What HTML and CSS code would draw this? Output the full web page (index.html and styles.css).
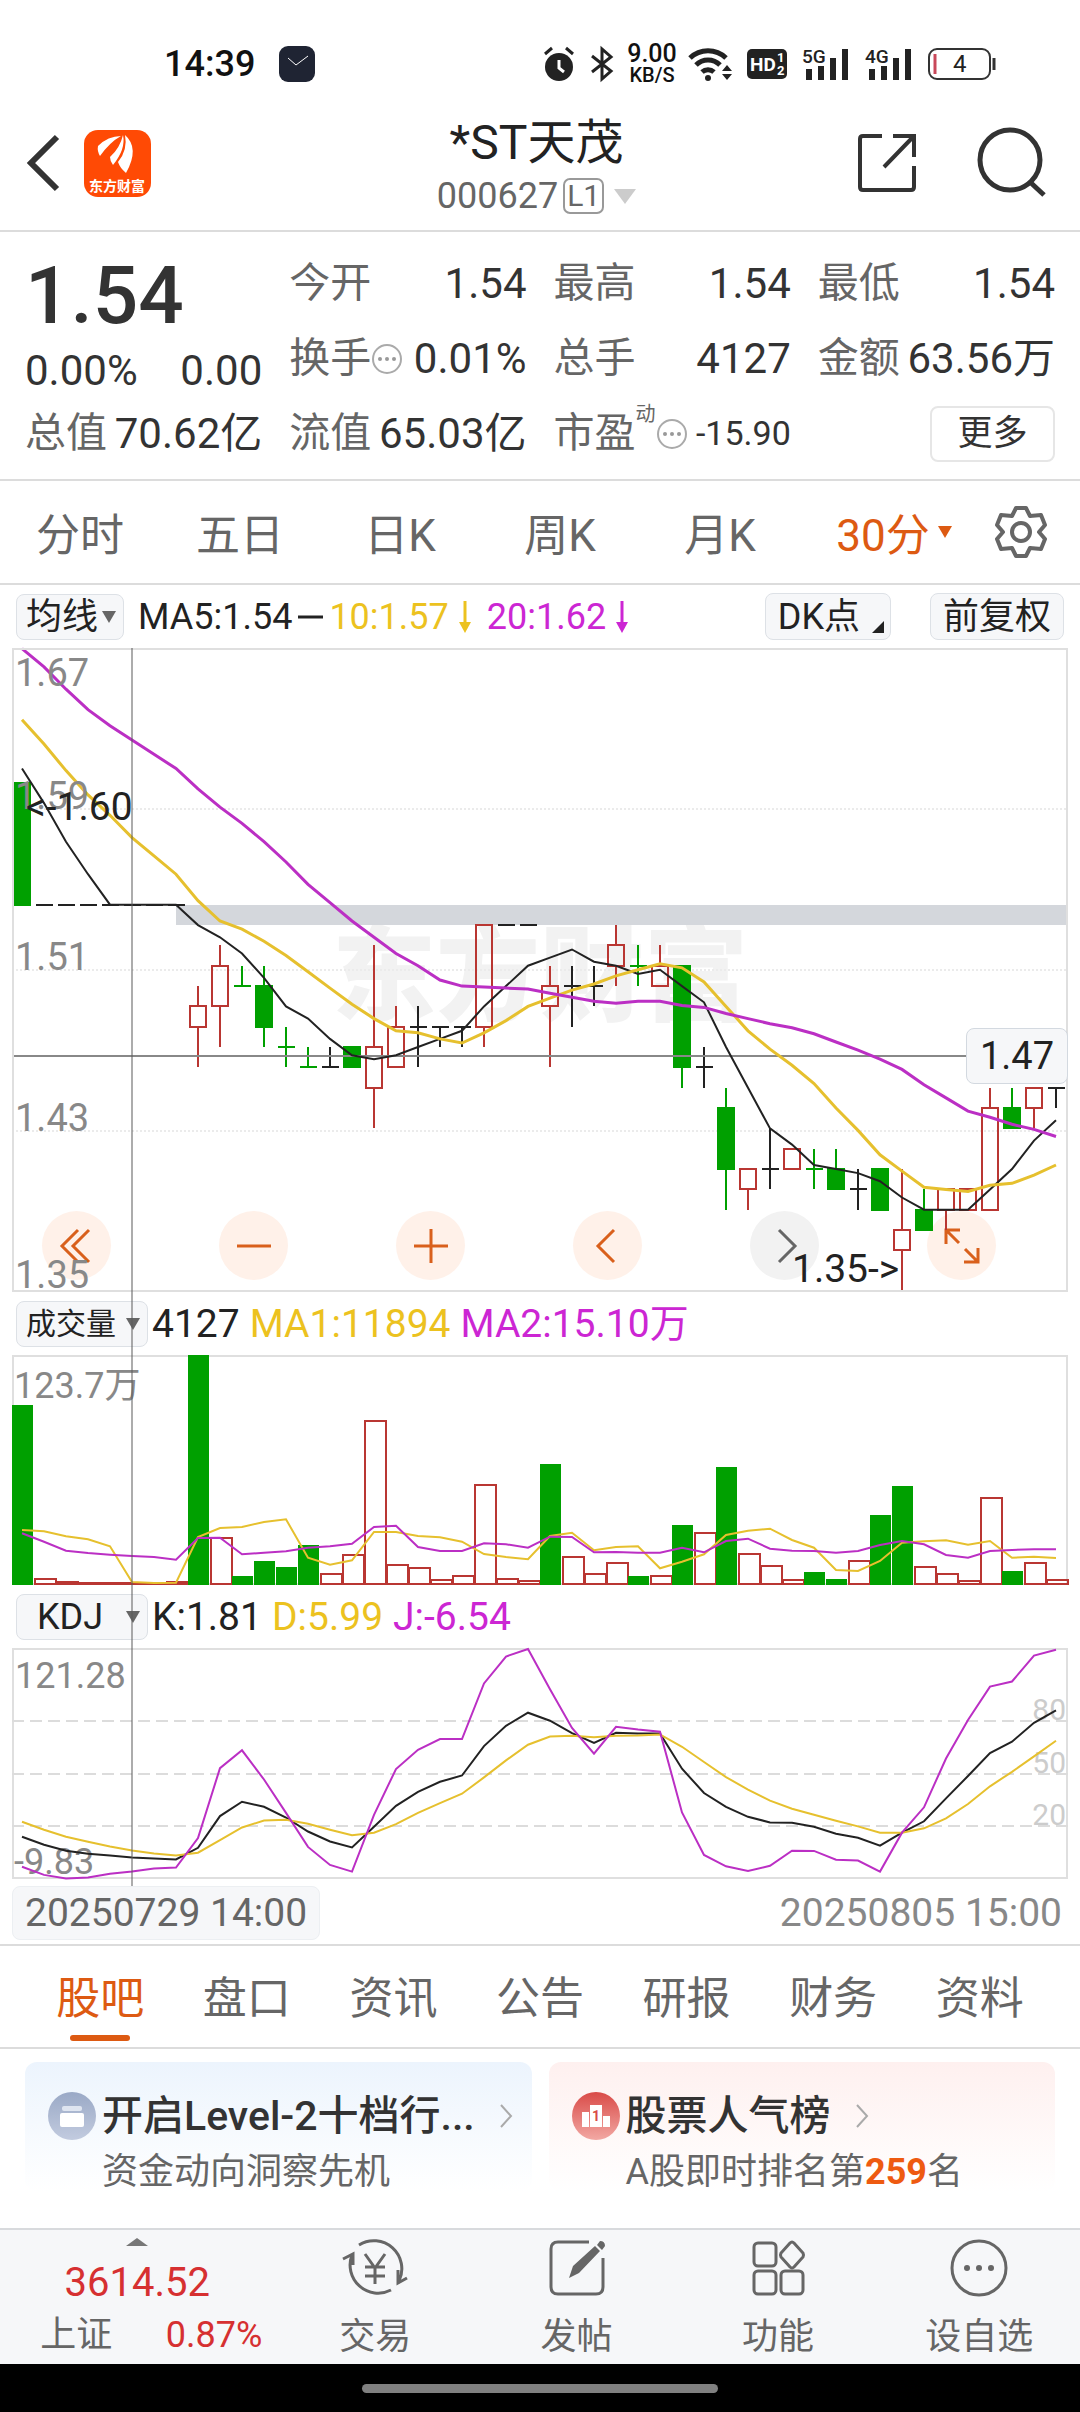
FILE: index.html
```html
<!DOCTYPE html>
<html lang="zh-CN">
<head>
    <meta charset="UTF-8">
    <meta name="viewport" content="width=device-width, initial-scale=1.0">
    <title>*ST天茂 000627</title>
    <link rel="stylesheet" href="styles.css">
</head>
<body>
    <!-- Status bar -->
    <div class="status">
        <span class="status-time">14:39</span>
        <svg class="status-app" width="36" height="36" viewBox="0 0 36 36"><rect width="36" height="36" rx="9" fill="#1f2433"/><path d="M9 12l8 7 12-9" fill="none" stroke="#fff" stroke-width="1"/></svg>
        <div class="status-icons">
            <svg width="32" height="36" viewBox="0 0 32 36"><circle cx="16" cy="21" r="14" fill="#222"/><path d="M2 8l7-6M30 8l-7-6" stroke="#222" stroke-width="3"/><path d="M16 14v8l5 4" fill="none" stroke="#fff" stroke-width="3"/></svg>
            <svg width="24" height="36" viewBox="0 0 24 36"><path d="M2 10l19 15-9 8V3l9 8L2 26" fill="none" stroke="#222" stroke-width="3"/></svg>
            <span class="net-speed"><span class="net-value">9.00</span><span>KB/S</span></span>
            <svg width="44" height="36" viewBox="0 0 44 36"><g fill="none" stroke="#222" stroke-width="5"><path d="M2 12a26 26 0 0 1 36 0"/><path d="M8 19a17 17 0 0 1 24 0"/><path d="M14 26a9 9 0 0 1 12 0"/></g><circle cx="20" cy="32" r="3" fill="#222"/><path d="M34 25l5-6 5 6zM34 28l5 6 5-6z" fill="#222"/></svg>
            <svg width="40" height="30" viewBox="0 0 40 30"><rect width="40" height="30" rx="5" fill="#222"/><text class="hd-text" x="3" y="22">HD</text><text class="hd-num" x="30" y="13">1</text><text class="hd-num" x="30" y="26">2</text></svg>
            <svg width="48" height="36" viewBox="0 0 48 36"><text class="sig-text" x="0" y="17">5G</text><path d="M7 34V23M19 34V20M31 34V12M43 34V3" stroke="#222" stroke-width="6"/></svg>
            <svg width="48" height="36" viewBox="0 0 48 36"><text class="sig-text" x="0" y="17">4G</text><path d="M7 34V23M19 34V20M31 34V12M43 34V3" stroke="#222" stroke-width="6"/></svg>
            <svg width="68" height="32" viewBox="0 0 68 32"><rect x="1" y="1" width="61" height="30" rx="8" fill="none" stroke="#333" stroke-width="2"/><path d="M66 10v12" stroke="#333" stroke-width="3"/><path d="M7 6v20" stroke="#c9485a" stroke-width="3"/><text class="bat-text" x="25" y="24">4</text></svg>
        </div>
    </div>

    <!-- Title bar -->
    <header class="header">
        <div class="header-side">
            <button class="icon-btn" aria-label="返回"><svg width="34" height="56" viewBox="0 0 34 56"><path d="M31 2L5 28l26 26" fill="none" stroke="#333" stroke-width="6"/></svg></button>
            <svg class="logo" width="67" height="67" viewBox="0 0 67 67"><rect width="67" height="67" rx="14" fill="#ff4a05"/><path d="M14 16Q24 6 37 6 26 12 16 26 13 21 14 16zM26 27Q36 18 39 5 42 19 29 35 26 31 26 27zM34 32Q44 20 41 5 56 18 42 43 36 38 34 32z" fill="#fff"/><text class="logo-text" x="33" y="61">东方财富</text></svg>
        </div>
        <div class="header-title">
            <h1>*ST天茂</h1>
            <button class="code">000627<span class="level">L1</span><svg width="22" height="15" viewBox="0 0 22 15"><path d="M0 0h22L11 15z" fill="#ccc"/></svg></button>
        </div>
        <div class="header-side header-right">
            <button class="icon-btn" aria-label="分享"><svg width="60" height="60" viewBox="0 0 60 60"><path d="M25 3H6q-3 0-3 3v48q0 3 3 3h48q3 0 3-3V33M36 3h21v21M57 3L27 34" fill="none" stroke="#333" stroke-width="4"/></svg></button>
            <button class="icon-btn" aria-label="搜索"><svg width="70" height="70" viewBox="0 0 70 70"><circle cx="33" cy="32" r="30" fill="none" stroke="#333" stroke-width="5"/><path d="M53 54l14 13" stroke="#333" stroke-width="5"/></svg></button>
        </div>
    </header>

    <!-- Quote -->
    <section class="quote">
        <div class="quote-main">
            <div class="price">1.54</div>
            <div class="cell"><span>0.00%</span><span>0.00</span></div>
        </div>
        <div class="cell"><span class="name">今开</span><span>1.54</span></div>
        <div class="cell"><span class="name">最高</span><span>1.54</span></div>
        <div class="cell"><span class="name">最低</span><span>1.54</span></div>
        <div class="cell"><span class="name">换手<svg class="more-dots" width="32" height="32" viewBox="0 0 32 32"><circle cx="16" cy="16" r="14" fill="none" stroke="#aaa" stroke-width="2"/><g fill="#999"><circle cx="9" cy="16" r="2"/><circle cx="16" cy="16" r="2"/><circle cx="23" cy="16" r="2"/></g></svg></span><span>0.01%</span></div>
        <div class="cell"><span class="name">总手</span><span>4127</span></div>
        <div class="cell"><span class="name">金额</span><span>63.56万</span></div>
        <div class="cell"><span class="name">总值</span><span>70.62亿</span></div>
        <div class="cell"><span class="name">流值</span><span>65.03亿</span></div>
        <div class="cell"><span class="name">市盈<sup>动</sup><svg class="more-dots" width="32" height="32" viewBox="0 0 32 32"><circle cx="16" cy="16" r="14" fill="none" stroke="#aaa" stroke-width="2"/><g fill="#999"><circle cx="9" cy="16" r="2"/><circle cx="16" cy="16" r="2"/><circle cx="23" cy="16" r="2"/></g></svg></span><span class="small">-15.90</span></div>
        <div class="cell cell-end"><button class="more-btn">更多</button></div>
    </section>

    <!-- Period tabs -->
    <nav class="periods">
        <button>分时</button>
        <button>五日</button>
        <button>日K</button>
        <button>周K</button>
        <button>月K</button>
        <button class="active">30分<svg width="14" height="12" viewBox="0 0 14 12"><path d="M0 0h14L7 12z" fill="#dd5a12"/></svg></button>
        <button aria-label="设置"><svg width="54" height="54" viewBox="-27 -27 54 54"><path d="M-5-24H5L9-16 20-17 24-7 18 0 24 7 20 17 9 16 5 24H-5L-9 16-20 17-24 7-18 0-24-7-20-17-9-16z" fill="none" stroke="#666" stroke-width="4" stroke-linejoin="round"/><circle r="9" fill="none" stroke="#666" stroke-width="4"/></svg></button>
    </nav>

    <!-- Charts -->
    <main class="charts">
        <div class="legend legend-main">
            <label class="pick"><select aria-label="主图指标"><option>均线</option></select><svg width="14" height="12" viewBox="0 0 14 12"><path d="M0 0h14L7 12z" fill="#666"/></svg></label>
            <span>MA5:1.54</span><svg width="25" height="4" viewBox="0 0 25 4"><path d="M0 2h25" stroke="#222" stroke-width="3"/></svg>
            <span class="yellow">10:1.57</span><svg class="arrow" width="12" height="32" viewBox="0 0 12 32"><path d="M6 0v28" stroke="#ecc21f" stroke-width="3"/><path d="M0 21h12L6 32z" fill="#ecc21f"/></svg>
            <span class="purple">20:1.62</span><svg class="arrow" width="12" height="32" viewBox="0 0 12 32"><path d="M6 0v28" stroke="#cc26d3" stroke-width="3"/><path d="M0 21h12L6 32z" fill="#cc26d3"/></svg>
            <div class="legend-btns">
                <button class="chip">DK点<svg width="12" height="12" viewBox="0 0 12 12"><path d="M12 0v12H0z" fill="#222"/></svg></button>
                <button class="chip">前复权</button>
            </div>
        </div>
        <div class="kline">
            <div class="controls">
                <button aria-label="最早"><svg width="36" height="36" viewBox="0 0 36 36"><path d="M19 2L3 18l16 16M30 2L14 18l16 16"/></svg></button>
                <button aria-label="缩小"><svg width="36" height="36" viewBox="0 0 36 36"><path d="M1 18h34"/></svg></button>
                <button aria-label="放大"><svg width="36" height="36" viewBox="0 0 36 36"><path d="M1 18h34M18 1v34"/></svg></button>
                <button aria-label="左移"><svg width="36" height="36" viewBox="0 0 36 36"><path d="M24 2L8 18l16 16"/></svg></button>
                <button class="off" aria-label="右移"><svg width="36" height="36" viewBox="0 0 36 36"><path d="M12 2l16 16-16 16"/></svg></button>
                <button aria-label="全屏"><svg width="36" height="36" viewBox="0 0 36 36"><path d="M2 16V2h14M3 3l12 12M34 20v14H20M33 33L21 21"/></svg></button>
            </div>
            <svg id="kline" class="chart" viewBox="0 0 1056 644"></svg>
            <span class="price-tag">1.47</span>
        </div>
        <div class="legend">
            <label class="pick pick-wide pick-vol"><select aria-label="副图指标一"><option>成交量</option></select><svg width="14" height="12" viewBox="0 0 14 12"><path d="M0 0h14L7 12z" fill="#666"/></svg></label>
            <span>4127</span><span class="yellow">MA1:11894</span><span class="purple">MA2:15.10万</span>
        </div>
        <svg id="volume" class="chart" viewBox="0 0 1056 230"></svg>
        <div class="legend">
            <label class="pick pick-wide pick-kdj"><select aria-label="副图指标二"><option>KDJ</option></select><svg width="14" height="12" viewBox="0 0 14 12"><path d="M0 0h14L7 12z" fill="#666"/></svg></label>
            <span>K:1.81</span><span class="yellow">D:5.99</span><span class="purple">J:-6.54</span>
        </div>
        <svg id="kdj" class="chart" viewBox="0 0 1056 231"></svg>
        <div class="crosshair"></div>
        <div class="dates"><span class="date-tag">20250729 14:00</span><span>20250805 15:00</span></div>
    </main>

    <!-- Content tabs -->
    <nav class="tabs">
        <a href="#" class="active">股吧</a>
        <a href="#">盘口</a>
        <a href="#">资讯</a>
        <a href="#">公告</a>
        <a href="#">研报</a>
        <a href="#">财务</a>
        <a href="#">资料</a>
    </nav>

    <section class="cards">
        <a href="#" class="card card-blue">
            <svg class="card-icon" width="48" height="48" viewBox="0 0 48 48"><defs><linearGradient id="gBlue" x2="0" y2="1"><stop stop-color="#9aa9c6"/><stop offset="1" stop-color="#c2cbdf"/></linearGradient></defs><circle cx="24" cy="24" r="24" fill="url(#gBlue)"/><rect x="14" y="14" width="20" height="5" rx="2" fill="#dfe5f0"/><rect x="12" y="21" width="24" height="14" rx="2" fill="#fff"/></svg>
            <strong>开启Level-2十档行...</strong>
            <svg class="card-arrow" width="14" height="24" viewBox="0 0 14 24"><path d="M2 1l10 11L2 23" fill="none" stroke="#aaa" stroke-width="2"/></svg>
            <span class="card-sub">资金动向洞察先机</span>
        </a>
        <a href="#" class="card card-red">
            <svg class="card-icon" width="48" height="48" viewBox="0 0 48 48"><defs><linearGradient id="gRed" x2="0" y2="1"><stop stop-color="#d94b48"/><stop offset="1" stop-color="#f2a8a3"/></linearGradient></defs><circle cx="24" cy="24" r="24" fill="url(#gRed)"/><path d="M10 35V20h7v15zM18 35V13h12v22zM31 35V24h7v11z" fill="#fff"/><text class="rank-num" x="24" y="29">1</text></svg>
            <strong>股票人气榜</strong>
            <svg class="card-arrow" width="14" height="24" viewBox="0 0 14 24"><path d="M2 1l10 11L2 23" fill="none" stroke="#aaa" stroke-width="2"/></svg>
            <span class="card-sub">A股即时排名第<b>259</b>名</span>
        </a>
    </section>

    <!-- Bottom bar -->
    <footer class="bottom">
        <button class="index">
            <svg width="22" height="8" viewBox="0 0 22 8"><path d="M0 8h22L11 0z" fill="#777"/></svg>
            <span class="index-value">3614.52</span>
            <span class="index-row"><span>上证</span><span class="red">0.87%</span></span>
        </button>
        <button>
            <svg width="66" height="60" viewBox="0 0 66 60"><g fill="none" stroke="#666" stroke-width="3"><path d="M17 7A28 28 0 0 1 57 43M49 52A28 28 0 0 1 10 17M1 21l10-5v11M65 40l-9 5V32" /><path d="M23 16l10 14 10-14M33 30v16M23 29h20M23 38h20"/></g></svg>
            <span>交易</span>
        </button>
        <button>
            <svg width="60" height="60" viewBox="0 0 60 60"><path d="M42 4H11q-7 0-7 7v38q0 7 7 7h38q7 0 7-7V20" fill="none" stroke="#666" stroke-width="3"/><path d="M22 40l4-12 22-20 5 5-21 22zM50 7l3-4q5 0 5 5l-3 4z" fill="#666"/></svg>
            <span>发帖</span>
        </button>
        <button>
            <svg width="56" height="60" viewBox="0 0 56 60"><g fill="none" stroke="#666" stroke-width="3"><rect x="4" y="5" width="22" height="23" rx="4"/><rect x="4" y="33" width="22" height="23" rx="4"/><rect x="31" y="33" width="22" height="23" rx="4"/><path d="M40 5q2-2 4 0l9 10q1 2 0 4l-9 10q-2 2-4 0l-9-10q-1-2 0-4z"/></g></svg>
            <span>功能</span>
        </button>
        <button>
            <svg width="60" height="60" viewBox="0 0 60 60"><circle cx="30" cy="30" r="27" fill="none" stroke="#666" stroke-width="3"/><g fill="#666"><circle cx="18" cy="30" r="3"/><circle cx="30" cy="30" r="3"/><circle cx="42" cy="30" r="3"/></g></svg>
            <span>设自选</span>
        </button>
    </footer>
    <div class="home"><div class="home-bar"></div></div>

    <script src="charts.js"></script>
</body>
</html>
```

FILE: styles.css
```css
* { box-sizing: border-box; }
body { margin: 0; background: #fff; color: #333; font-family: Roboto, "Noto Sans CJK SC", sans-serif; font-size: 36px; }
button { padding: 0; border: 0; background: none; color: inherit; font: inherit; cursor: pointer; }
a { color: inherit; text-decoration: none; }
svg { display: block; flex: none; overflow: visible; }
.yellow { color: #ecc21f; }
.purple { color: #cc26d3; }
.red { color: #d63031; }

/* status bar */
.status { display: flex; align-items: center; height: 116px; padding: 11px 84px 0 164px; color: #111; }
.status-time { font-weight: 500; }
.status-app { margin-left: 24px; }
.status-icons { display: flex; align-items: center; gap: 15px; margin-left: auto; }
.net-speed { display: flex; flex-direction: column; align-items: center; width: 50px; margin: 0 -4px 0 -2px; font-size: 20px; line-height: 20px; font-weight: 500; }
.net-value { font-size: 25px; line-height: 23px; }
.hd-text { font-size: 19px; font-weight: 700; fill: #fff; }
.hd-num { font-size: 13px; font-weight: 700; fill: #fff; }
.sig-text { font-size: 19px; font-weight: 500; fill: #222; }
.bat-text { font-size: 24px; fill: #222; }

/* title bar */
.header { display: grid; grid-template-columns: 1fr auto 1fr; align-items: center; height: 116px; padding: 0 33px 20px 26px; border-bottom: 2px solid #dcdcdc; }
.header-side { display: flex; align-items: center; gap: 24px; padding-bottom: 12px; }
.header-right { justify-content: flex-end; gap: 60px; }
.logo-text { font-size: 14px; font-weight: 700; fill: #fff; text-anchor: middle; }
.header-title { display: flex; flex-direction: column; align-items: center; }
.header-title h1 { margin: 0; font-size: 48px; line-height: 54px; font-weight: 400; color: #222; }
.code { display: flex; align-items: center; gap: 5px; line-height: 52px; color: #666; }
.level { margin-right: 5px; padding: 0 2px; border: 2px solid #999; border-radius: 7px; font-size: 30px; line-height: 32px; }

/* quote */
.quote { display: grid; grid-template-columns: repeat(4, 1fr); grid-auto-rows: 75px; column-gap: 27px; padding: 14px 25px 8px; height: 249px; border-bottom: 2px solid #dcdcdc; font-size: 42px; }
.quote-main { grid-row: span 2; padding-top: 6px; }
.price { height: 86px; line-height: 88px; font-size: 80px; font-weight: 500; }
.quote-main .cell { height: 64px; }
.cell { display: flex; align-items: center; justify-content: space-between; line-height: 75px; white-space: nowrap; }
.cell-end { justify-content: flex-end; }
.name { display: flex; align-items: center; font-size: 41px; color: #666; }
.name sup { align-self: flex-start; padding-top: 4px; font-size: 20px; line-height: 28px; }
.small { font-size: 34px; }
.more-btn { width: 125px; height: 56px; border: 2px solid #e6e6e6; border-radius: 8px; font-size: 35px; line-height: 50px; }

/* period tabs */
.periods { display: grid; grid-template-columns: repeat(5, 160fr) 188fr 66fr; height: 104px; padding-right: 26px; border-bottom: 2px solid #dcdcdc; font-size: 44px; color: #666; }
.periods button { display: flex; align-items: center; justify-content: center; gap: 8px; }
.periods .active { color: #dd5a12; }

/* charts */
.charts { position: relative; padding: 0 12px; border-bottom: 2px solid #dcdcdc; }
.legend { display: flex; align-items: center; gap: 10px; height: 63px; padding: 0 4px; font-size: 39px; line-height: 48px; color: #222; white-space: nowrap; }
.legend-main { gap: 6px; font-size: 36px; }
.legend .pick { margin-right: -6px; }
.legend-main .pick { margin-right: 8px; }
.legend-main .arrow { margin: 0 10px 0 4px; }
.legend-btns { display: flex; gap: 39px; margin-left: auto; }
.pick { display: flex; align-items: center; width: 108px; height: 46px; padding: 0 7px 0 9px; border: 1px solid #dde1e6; border-radius: 8px; background: #f6f7f9; }
.pick select { flex: 1; min-width: 0; padding: 0; border: 0; background: none; appearance: none; color: inherit; font: inherit; font-size: 36px; line-height: 44px; }
.pick-wide { width: 132px; }
.pick-vol select { font-size: 30px; }
.pick-kdj { padding-left: 20px; }
.chip { display: flex; align-items: center; height: 47px; padding: 0 12px; border: 1px solid #dde1e6; border-radius: 8px; background: #f6f7f9; font-size: 36px; line-height: 44px; }
.chip svg { align-self: flex-end; margin: 0 -6px 6px 12px; }
.kline { position: relative; }
.chart { position: relative; width: 100%; height: auto; pointer-events: none; }
.controls { position: absolute; left: 30px; right: 72px; bottom: 12px; display: flex; justify-content: space-between; }
.controls button { display: flex; align-items: center; justify-content: center; width: 69px; height: 69px; border-radius: 50%; background: #fff1e9; }
.controls path { fill: none; stroke: #d9601c; stroke-width: 3; }
.controls .off { background: #f2f2f2; }
.controls .off path { stroke: #666; }
.price-tag { position: absolute; right: 0; top: 59%; padding: 0 13px; border: 1px solid #d3d9e0; border-radius: 8px; background: #f6f7f9; font-size: 38px; line-height: 54px; color: #222; }
.crosshair { position: absolute; left: 12.1%; top: 63px; bottom: 58px; width: 2px; background: rgba(90, 90, 90, .5); }
.dates { display: flex; align-items: center; justify-content: space-between; height: 65px; padding: 2px 6px 0 0; font-size: 39px; color: #888; }
.date-tag { padding: 0 12px; border: 1px solid #eceff2; border-radius: 8px; background: #f6f7f9; line-height: 52px; color: #666; }

.frame { fill: none; stroke: #dfdfdf; stroke-width: 2; }
.grid { stroke: #ebebeb; stroke-width: 2; stroke-dasharray: 2 2; }
.grid-dash { stroke: #dcdcdc; stroke-width: 2; stroke-dasharray: 12 6; }
.axis { font-size: 36px; fill: #888; }
.axis-price { font-size: 38px; fill: #888; }
.mark { font-size: 39px; fill: #222; }
.ref { font-size: 30px; fill: #ccc; text-anchor: end; }
.watermark { font-size: 104px; font-weight: 900; fill: #f2f2f2; text-anchor: middle; }
.up { fill: none; stroke: #b93632; stroke-width: 2; }
.down { fill: #00a000; stroke: #00a000; stroke-width: 2; }
.flat { fill: none; stroke: #222; stroke-width: 2; }
.line { fill: none; stroke-width: 3; }
.line.c-black, .line-thin { fill: none; stroke-width: 2; }
.c-black { stroke: #222; }
.c-yellow { stroke: #e6c02e; }
.c-purple { stroke: #bb2fc4; }

/* content tabs */
.tabs { display: grid; grid-template-columns: repeat(7, 1fr); height: 103px; padding: 0 27px; border-bottom: 2px solid #dcdcdc; font-size: 44px; line-height: 107px; text-align: center; color: #666; }
.tabs a { position: relative; }
.tabs .active { color: #dd5a12; }
.tabs .active::after { content: ""; position: absolute; left: 50%; top: 89px; width: 60px; height: 6px; margin-left: -30px; border-radius: 3px; background: #dd5a12; }

/* cards */
.cards { display: grid; grid-template-columns: repeat(2, minmax(0, 1fr)); gap: 17px; height: 179px; padding: 13px 25px; }
.card { display: grid; grid-template-columns: 48px auto 1fr; column-gap: 6px; align-content: start; align-items: center; height: 130px; padding: 22px 16px 0 23px; border-radius: 12px; white-space: nowrap; }
.card-blue { background: linear-gradient(#ecf4fd, #fff); }
.card-red { background: linear-gradient(#fef0ef, #fff); }
.card strong { font-size: 41px; line-height: 64px; font-weight: 500; }
.card-arrow { margin-left: 18px; }
.card-sub { grid-column: 2 / 4; line-height: 48px; color: #666; }
.card-sub b { color: #ee5a10; font-weight: 700; }
.rank-num { font-size: 14px; font-weight: 700; fill: #d94b48; text-anchor: middle; }

/* bottom bar */
.bottom { display: grid; grid-template-columns: 274fr repeat(4, 201fr); height: 136px; border-top: 2px solid #d8dadd; background: #f6f7f9; color: #666; }
.bottom button { display: flex; flex-direction: column; align-items: center; padding-top: 8px; line-height: 54px; }
.bottom button > span { padding-top: 12px; }
.bottom .index-value { font-size: 40px; line-height: 50px; color: #d63031; }
.bottom .index-row { display: flex; justify-content: space-between; width: 222px; margin-left: 28px; padding: 0; }
.home { display: flex; align-items: center; justify-content: center; height: 48px; background: #000; }
.home-bar { width: 33%; height: 9px; border-radius: 5px; background: #808080; }
```

FILE: charts.js
```javascript
const STEP = 22;
const cx = i => 10 + i * STEP;

// [open, close, high, low] in cents
const candles = [
    [160, 154, 160, 154], [154, 154, 154, 154], [154, 154, 154, 154], [154, 154, 154, 154],
    [154, 154, 154, 154], [154, 154, 154, 154], [154, 154, 154, 154], [154, 154, 154, 154],
    [148, 149, 150, 146], [149, 151, 152, 147], [150, 150, 151, 150, 'down'], [150, 148, 151, 147],
    [147, 147, 148, 146, 'down'], [146, 146, 147, 146, 'down'], [146, 146, 147, 146], [147, 146, 147, 146],
    [145, 147, 152, 143], [146, 148, 149, 146], [148, 148, 149, 146], [148, 148, 148, 147],
    [148, 148, 148, 147], [148, 153, 153, 147], [153, 153, 153, 153], [153, 153, 153, 153],
    [149, 150, 151, 146], [150, 150, 151, 148], [150, 150, 151, 149], [151, 152, 153, 150],
    [151, 151, 152, 150, 'down'], [150, 151, 152, 150], [151, 146, 151, 145], [146, 146, 147, 145],
    [144, 141, 145, 139], [140, 141, 141, 139], [141, 141, 143, 140], [141, 142, 142, 141],
    [141, 141, 142, 140, 'down'], [141, 140, 142, 140], [140, 140, 141, 139], [141, 139, 141, 139],
    [137, 138, 141, 135], [139, 138, 140, 138], [139, 140, 140, 138], [139, 140, 140, 139],
    [139, 144, 145, 139], [144, 143, 145, 143], [144, 145, 145, 143], [145, 145, 145, 144]
];

// averages of the bars whose window starts before the first candle
const lead = {
    5: [160.7, 159, 157.1, 155.5],
    10: [163.1, 161.9, 160.6, 159.4, 158.4, 157.3, 156.4, 155.5, 154.2],
    20: [166.6, 165.7, 164.6, 163.6, 162.8, 162.1, 161.4, 160.7, 159.7, 158.8, 158, 157.1, 156.1, 155, 154.1, 153.2, 152.4, 151.6, 151]
};

// volume bars, g = falling
const volumes = ['534g', 15, 6, 3, 3, 3, 3, 6, '684g', 138, '21g', '66g', '48g', '114g', 30, 87, 489, 57, 48, 12, 24, 297, 15, 9,
    '357g', 81, 30, 63, '21g', 24, '174g', 153, '348g', 90, 54, 12, '33g', '12g', 69, '204g', '291g', 51, 30, 9, 258, '36g', 63, 12];
const volMa1 = [162, 158, 143, 134, 113, 6, 3, 4, 141, 168, 171, 186, 194, 79, 58, 71, 156, 156, 144, 140, 127, 90, 81, 74,
    144, 154, 101, 111, 113, 47, 67, 89, 147, 160, 166, 132, 109, 42, 39, 69, 124, 128, 131, 118, 129, 79, 82, 78];
const volMa2 = [152, 127, 100, 93, 88, 84, 81, 73, 138, 139, 89, 94, 98, 109, 113, 121, 171, 175, 111, 99, 99, 122, 119, 109,
    142, 141, 95, 96, 94, 94, 109, 95, 129, 136, 106, 100, 99, 94, 99, 117, 129, 119, 87, 79, 99, 102, 104, 104];

const kLine = [14, 9.4, 6, 4.3, 3.3, 2.2, 1.6, 1, 7.7, 25.8, 34, 31.1, 25, 17, 11.3, 7.9, 19.7, 31.7, 39.7, 45.4, 49, 65.8, 77.4, 84.9,
    80.3, 73.2, 67.7, 73.4, 73, 73, 52.9, 39, 31.1, 25.4, 22.2, 22, 19.7, 15.7, 13.4, 8.9, 16.3, 22.8, 35.9, 48.7, 61.8, 68.3, 79.1, 86.2];
const dLine = [22.6, 18, 14, 11.1, 8.5, 6.2, 4.5, 3.3, 4.9, 12.1, 19.3, 23.3, 23.7, 21.4, 18, 14.8, 16.3, 21.2, 27.7, 33.2, 38.6, 47.9, 57.6, 66.6,
    71.3, 71.7, 70.8, 71.7, 71.9, 72.5, 65.4, 56.7, 48.1, 40.9, 34.6, 30, 26.6, 23.1, 19.9, 16.3, 16.3, 18.8, 24.5, 32.7, 42.8, 51.1, 59.9, 68.9];
const jLine = kLine.map((k, i) => Math.max(-9.83, Math.min(121.28, 3 * k - 2 * dLine[i])));

function polyline(values, y, cls) {
    const points = values.map((v, i) => `${cx(i)},${y(v).toFixed(1)}`).join(' ');
    return `<polyline class="${cls}" points="${points}"/>`;
}

function average(n) {
    return candles.map((c, i) => {
        if (i < n - 1) return lead[n][i];
        return candles.slice(i - n + 1, i + 1).reduce((s, b) => s + b[1], 0) / n;
    });
}

function drawKline() {
    const y = c => 643 - (c - 135) * 20.33;
    const row = c => Math.round(y(c));
    let out = '<text class="watermark" x="528" y="365">东方财富</text>';
    [161, 322, 483].forEach(g => { out += `<path class="grid" d="M0 ${g}H1056"/>`; });
    out += `<rect x="164" y="${row(154)}" width="892" height="20" fill="#d4d7dc"/>`;
    candles.forEach(([open, close, high, low, kind], i) => {
        const x = cx(i);
        const cls = kind || (close > open ? 'up' : close < open ? 'down' : 'flat');
        const top = row(Math.max(open, close));
        const bottom = row(Math.min(open, close));
        if (open === close) {
            out += `<path class="${cls}" d="M${x - 8} ${top}H${x + 9}M${x} ${row(high)}V${row(low)}"/>`;
        } else {
            out += `<path class="${cls}" d="M${x} ${row(high)}V${top}M${x} ${bottom}V${row(low)}"/>`;
            out += `<rect class="${cls}" x="${x - 8}" y="${top}" width="16" height="${bottom - top}"/>`;
        }
    });
    out += '<path d="M0 408H1056" stroke="#888" stroke-width="2"/>';
    out += polyline(average(5), y, 'line c-black');
    out += polyline(average(10), y, 'line c-yellow');
    out += polyline(average(20), y, 'line c-purple');
    [['1.67', 38], ['1.59', 161], ['1.51', 322], ['1.43', 483], ['1.35', 640]].forEach(([t, ty]) => {
        out += `<text class="axis-price" x="3" y="${ty}">${t}</text>`;
    });
    out += '<text class="mark" x="14" y="172">&lt;-1.60</text><text class="mark" x="780" y="634">1.35-&gt;</text>';
    out += '<rect class="frame" x="1" y="1" width="1054" height="642"/>';
    document.getElementById('kline').innerHTML = out;
}

function drawVolume() {
    const y = v => 229 - v / 3;
    let out = '<rect class="frame" x="1" y="1" width="1054" height="228"/>';
    out += '<text class="axis" x="2" y="43">123.7万</text>';
    volumes.forEach((v, i) => {
        const n = parseInt(v, 10);
        const cls = String(v).endsWith('g') ? 'down' : 'up';
        const w = cls === 'up' ? 21 : 19;
        out += `<rect class="${cls}" x="${cx(i) - 9}" y="${y(n)}" width="${w}" height="${n / 3}"/>`;
    });
    out += polyline(volMa1, y, 'line-thin c-yellow');
    out += polyline(volMa2, y, 'line-thin c-purple');
    document.getElementById('volume').innerHTML = out;
}

function drawKdj() {
    const y = v => 1 + (121.28 - v) * 1.75;
    let out = '<rect class="frame" x="1" y="1" width="1054" height="229"/>';
    [80, 50, 20].forEach(v => {
        out += `<path class="grid-dash" d="M0 ${Math.round(y(v))}H1056"/><text class="ref" x="1054" y="${Math.round(y(v)) - 1}">${v}</text>`;
    });
    out += '<text class="axis" x="3" y="40">121.28</text><text class="axis" x="2" y="226">-9.83</text>';
    out += polyline(kLine, y, 'line-thin c-black');
    out += polyline(dLine, y, 'line-thin c-yellow');
    out += polyline(jLine, y, 'line-thin c-purple');
    document.getElementById('kdj').innerHTML = out;
}

drawKline();
drawVolume();
drawKdj();
```
